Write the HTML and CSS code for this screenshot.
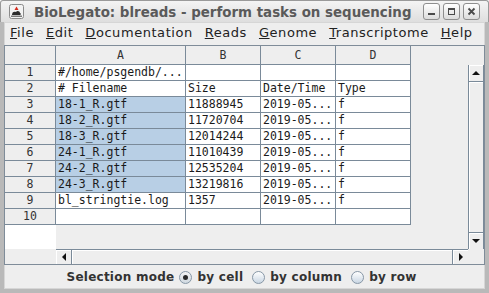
FILE: index.html
```html
<!DOCTYPE html>
<html lang="en">
<head>
    <meta charset="UTF-8">
    <title>BioLegato: blreads</title>
    <link rel="stylesheet" href="styles.css">
</head>
<body>

<div class="window">
    <div class="titlebar">
        <svg class="app-icon" width="15" height="15" viewBox="0 0 15 15">
            <rect x="0.5" y="0.5" width="14" height="14" rx="2" fill="#f3f3f3" stroke="#8a8a8a"/>
            <path d="M3 11 C3 8 5 7 7 8 C8 6 11 7 11 9 C12 9 12 11 11 11 Z" fill="#2b2b2b"/>
            <path d="M7.5 2.5 L9.5 6 L5.5 6 Z" fill="#d42a1c"/>
            <rect x="2" y="11.5" width="11" height="1.5" fill="#7a7a7a"/>
        </svg>
        <span class="title">BioLegato: blreads - perform tasks on sequencing</span>
        <div class="wm-buttons">
            <span class="wm-btn">
                <svg width="9" height="9" viewBox="0 0 9 9"><rect x="1" y="6" width="7" height="2" fill="#4a4a4a"/></svg>
            </span>
            <span class="wm-btn">
                <svg width="9" height="9" viewBox="0 0 9 9"><rect x="1.5" y="1.5" width="6" height="6" fill="none" stroke="#4a4a4a"/><rect x="1" y="1" width="7" height="2" fill="#4a4a4a"/></svg>
            </span>
            <span class="wm-btn">
                <svg width="9" height="9" viewBox="0 0 9 9"><path d="M1.5 1.5 L7.5 7.5 M7.5 1.5 L1.5 7.5" stroke="#4a4a4a" stroke-width="1.8"/></svg>
            </span>
        </div>
    </div>

    <div class="frame">
        <div class="menubar">
            <span class="menu"><u>F</u>ile</span>
            <span class="menu"><u>E</u>dit</span>
            <span class="menu"><u>D</u>ocumentation</span>
            <span class="menu"><u>R</u>eads</span>
            <span class="menu"><u>G</u>enome</span>
            <span class="menu"><u>T</u>ranscriptome</span>
            <span class="menu"><u>H</u>elp</span>
        </div>

        <div class="pane">
            <div class="corner head-corner"></div>
            <div class="col-headers">
                <div class="hcell col-a">A</div>
                <div class="hcell">B</div>
                <div class="hcell">C</div>
                <div class="hcell">D</div>
            </div>
            <div class="corner"></div>

            <div class="row-headers">
                <div class="rcell">1</div>
                <div class="rcell">2</div>
                <div class="rcell">3</div>
                <div class="rcell">4</div>
                <div class="rcell">5</div>
                <div class="rcell">6</div>
                <div class="rcell">7</div>
                <div class="rcell">8</div>
                <div class="rcell">9</div>
                <div class="rcell">10</div>
            </div>
            <div class="viewport">
                <div class="trow"><div class="cell">#/home/psgendb/...</div><div class="cell"></div><div class="cell"></div><div class="cell"></div></div>
                <div class="trow"><div class="cell"># Filename</div><div class="cell">Size</div><div class="cell">Date/Time</div><div class="cell">Type</div></div>
                <div class="trow"><div class="cell selected">18-1_R.gtf</div><div class="cell">11888945</div><div class="cell">2019-05...</div><div class="cell">f</div></div>
                <div class="trow"><div class="cell selected">18-2_R.gtf</div><div class="cell">11720704</div><div class="cell">2019-05...</div><div class="cell">f</div></div>
                <div class="trow"><div class="cell selected">18-3_R.gtf</div><div class="cell">12014244</div><div class="cell">2019-05...</div><div class="cell">f</div></div>
                <div class="trow"><div class="cell selected">24-1_R.gtf</div><div class="cell">11010439</div><div class="cell">2019-05...</div><div class="cell">f</div></div>
                <div class="trow"><div class="cell selected">24-2_R.gtf</div><div class="cell">12535204</div><div class="cell">2019-05...</div><div class="cell">f</div></div>
                <div class="trow"><div class="cell selected">24-3_R.gtf</div><div class="cell">13219816</div><div class="cell">2019-05...</div><div class="cell">f</div></div>
                <div class="trow"><div class="cell">bl_stringtie.log</div><div class="cell">1357</div><div class="cell">2019-05...</div><div class="cell">f</div></div>
                <div class="trow"><div class="cell"></div><div class="cell"></div><div class="cell"></div><div class="cell"></div></div>
            </div>
            <div class="vscroll">
                <div class="sb-btn">
                    <svg width="8" height="4" viewBox="0 0 8 4"><path d="M4 0 L8 4 L0 4 Z" fill="#111"/></svg>
                </div>
                <div class="sb-track"></div>
                <div class="sb-btn sb-end">
                    <svg width="8" height="4" viewBox="0 0 8 4"><path d="M0 0 L8 0 L4 4 Z" fill="#111"/></svg>
                </div>
            </div>

            <div class="corner"></div>
            <div class="hscroll">
                <div class="sb-btn">
                    <svg width="4" height="8" viewBox="0 0 4 8"><path d="M0 4 L4 0 L4 8 Z" fill="#111"/></svg>
                </div>
                <div class="sb-track"></div>
                <div class="sb-btn sb-end">
                    <svg width="4" height="8" viewBox="0 0 4 8"><path d="M0 0 L4 4 L0 8 Z" fill="#111"/></svg>
                </div>
            </div>
            <div class="corner"></div>
        </div>

        <div class="modes">
            <span class="mode-label">Selection mode</span>
            <label class="option"><span class="radio checked"></span>by cell</label>
            <label class="option"><span class="radio"></span>by column</label>
            <label class="option"><span class="radio"></span>by row</label>
        </div>
    </div>
</div>

</body>
</html>
```

FILE: styles.css
```css
body {
    margin: 0;
    background: #ffffff;
}
.window {
    width: 489px;
    height: 293px;
    display: flex;
    flex-direction: column;
    font-family: "DejaVu Sans", sans-serif;
    color: #222;
}

/* window manager title bar */
.titlebar {
    height: 22px;
    flex: none;
    display: flex;
    align-items: center;
    box-sizing: border-box;
    padding-left: 8px;
    background: linear-gradient(#f4f4f4, #dedede);
    border: 1px solid #9a9a9a;
    border-bottom: none;
    border-radius: 3px 3px 0 0;
}
.app-icon {
    flex: none;
    margin-top: -1px;
}
.title {
    margin-left: 10px;
    padding-top: 2px;
    font-size: 13.4px;
    font-weight: bold;
    color: #5a5a5a;
    white-space: nowrap;
}
.wm-buttons {
    margin-left: auto;
    margin-right: 8px;
    display: flex;
    gap: 3px;
}
.wm-btn {
    width: 17px;
    height: 17px;
    box-sizing: border-box;
    display: flex;
    align-items: center;
    justify-content: center;
    border: 1px solid #8e8e8e;
    border-radius: 3px;
    background: linear-gradient(#ffffff, #dcdcdc);
}

/* java frame */
.frame {
    flex: 1;
    display: flex;
    flex-direction: column;
    background: #eeeeee;
    border: 4px solid #b9b9b9;
    border-top: none;
    box-shadow: inset 0 0 0 1px #d6d6d6;
}
.menubar {
    height: 23px;
    flex: none;
    display: flex;
    align-items: flex-start;
}
.menu {
    padding: 0 6px;
    font-size: 13px;
    line-height: 21px;
    letter-spacing: 0.55px;
    color: #222;
}
.menu u {
    text-decoration-thickness: 1px;
}

/* table scroll pane */
.pane {
    flex: none;
    display: grid;
    grid-template-columns: 51px 412px 16px;
    grid-template-rows: 19px 184px 15px;
    border: 1px solid #7f8c99;
    background: #eeeeee;
    font-family: "DejaVu Sans Mono", monospace;
    font-size: 11.5px;
}
.corner {
    background: #eeeeee;
}
.head-corner {
    box-sizing: border-box;
    border-right: 1px solid #7a8a99;
    border-bottom: 1px solid #7a8a99;
}
.col-headers {
    display: grid;
    grid-template-columns: 130px 75px 75px 75px;
    align-self: start;
}
.hcell {
    height: 19px;
    box-sizing: border-box;
    border-right: 1px solid #7a8a99;
    border-bottom: 1px solid #7a8a99;
    text-align: center;
    line-height: 18px;
    color: #333;
}
.row-headers {
    background: #ffffff;
}
.rcell {
    height: 16px;
    box-sizing: border-box;
    border-right: 1px solid #7a8a99;
    border-bottom: 1px solid #7a8a99;
    background: #eeeeee;
    text-align: center;
    line-height: 15px;
    color: #333;
}
.viewport {
    background: #eeeeee;
}
.trow {
    display: grid;
    grid-template-columns: 130px 75px 75px 75px;
    width: 355px;
}
.cell {
    height: 16px;
    box-sizing: border-box;
    border-right: 1px solid #7a8a99;
    border-bottom: 1px solid #7a8a99;
    background: #ffffff;
    padding-left: 2px;
    line-height: 15px;
    white-space: nowrap;
    overflow: hidden;
    color: #1a1a1a;
}
.cell.selected {
    background: #b8cfe5;
}

/* scrollbars */
.vscroll {
    display: flex;
    flex-direction: column;
    box-sizing: border-box;
    border-left: 1px solid #7a8a99;
    border-right: 1px solid #7a8a99;
}
.hscroll {
    display: flex;
    box-sizing: border-box;
    border-top: 1px solid #7a8a99;
}
.sb-btn {
    flex: none;
    display: flex;
    align-items: center;
    justify-content: center;
    background: #eeeeee;
    box-shadow: inset 1px 1px 0 #ffffff;
}
.vscroll .sb-btn {
    height: 16px;
    border-bottom: 1px solid #7a8a99;
}
.vscroll .sb-end {
    border-bottom: none;
    border-top: 1px solid #7a8a99;
}
.hscroll .sb-btn {
    width: 15px;
    border-right: 1px solid #7a8a99;
}
.hscroll .sb-end {
    border-right: none;
    border-left: 1px solid #7a8a99;
}
.sb-track {
    flex: 1;
    background: #eeeeee;
    box-shadow: inset 1px 1px 0 #ffffff;
}

/* selection mode radios */
.modes {
    flex: 1;
    display: flex;
    align-items: center;
    justify-content: center;
    padding-right: 6px;
    font-size: 12px;
    font-weight: bold;
    letter-spacing: 0.25px;
    color: #333;
}
.mode-label {
    margin-right: 5px;
}
.option {
    display: flex;
    align-items: center;
    gap: 5px;
    margin-right: 9px;
}
.option:last-child {
    margin-right: 0;
}
.radio {
    width: 13px;
    height: 13px;
    box-sizing: border-box;
    border-radius: 50%;
    border: 1px solid #8797a6;
    background: linear-gradient(#ffffff, #c9d6e3);
    display: flex;
    align-items: center;
    justify-content: center;
}
.radio.checked {
    background: linear-gradient(#f4f4f4, #cfd8e0);
}
.radio.checked::after {
    content: "";
    width: 5px;
    height: 5px;
    border-radius: 50%;
    background: #2a2a2a;
}
```
